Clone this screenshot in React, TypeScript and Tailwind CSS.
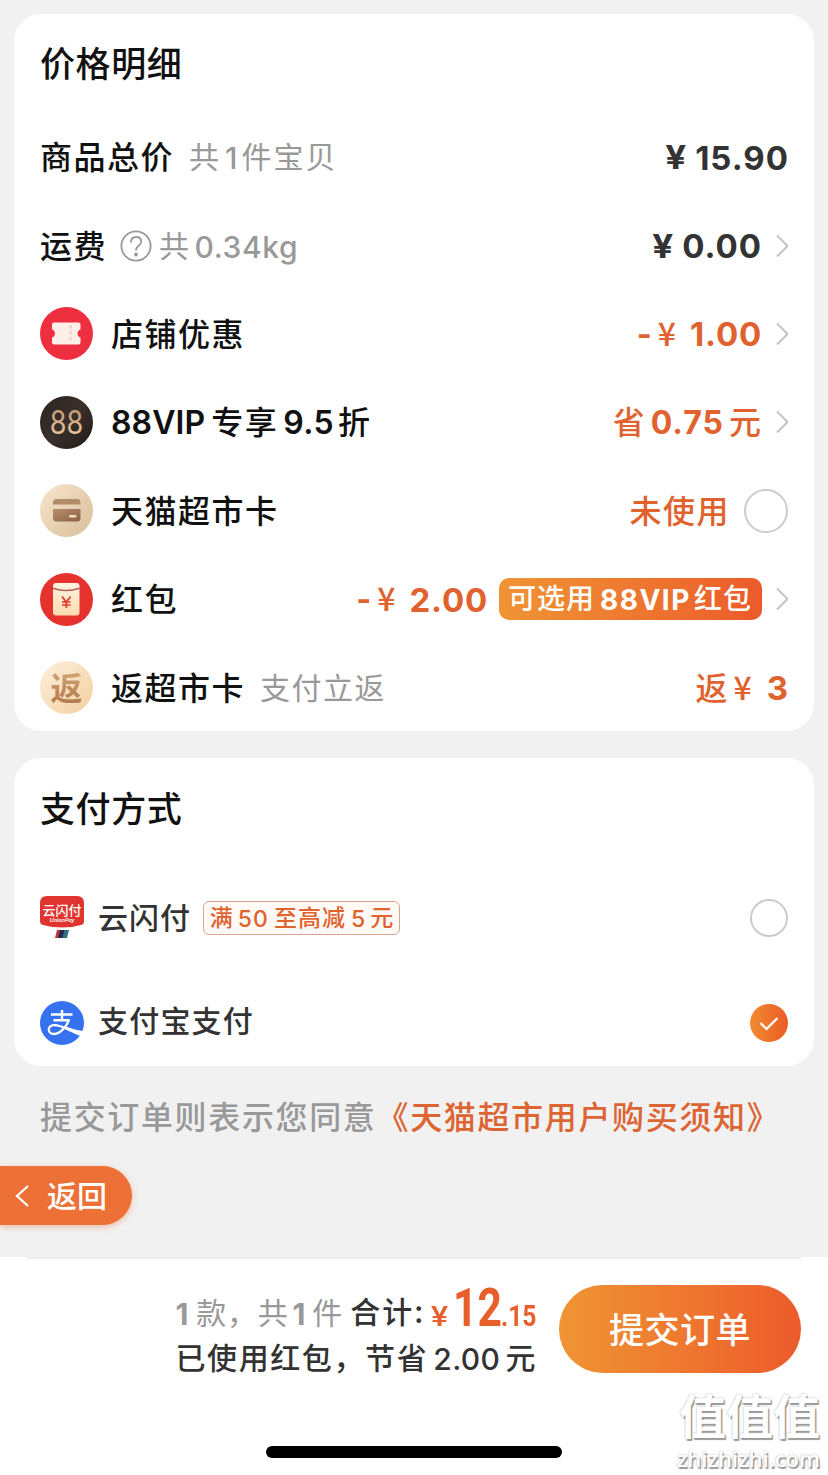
import type { ReactNode } from 'react';
import clsx from 'clsx';

const CJK = 'font-["Noto_Sans_CJK_SC",sans-serif]';
const NUM = 'font-["Inter",sans-serif]';

// Latin digits sit a little lower than the Chinese text around them
function Num({ children, className }: { children: ReactNode; className?: string }) {
  return <span className={clsx('inline-block translate-y-[3px]', NUM, className)}>{children}</span>;
}

function Chevron() {
  return (
    <svg className="ml-[15px] h-6 w-[12px] shrink-0 translate-y-[2px]" viewBox="0 0 12 24" fill="none">
      <path d="M1 1.500 11.500 12 1 22.500" stroke="#c4c4c4" strokeWidth="2" />
    </svg>
  );
}

function CouponIcon() {
  return (
    <svg className="size-[53px]" viewBox="0 0 53 53">
      <circle cx="26.5" cy="26.5" r="26.5" fill="#ee2f40" />
      <path
        d="M14 15.500h24.500a2 2 0 0 1 2 2v5a4.200 4.200 0 0 0 0 8v5a2 2 0 0 1-2 2H14a2 2 0 0 1-2-2v-5a4.200 4.200 0 0 0 0-8v-5a2 2 0 0 1 2-2Z"
        fill="#fdf0e8"
      />
      <path d="M30.500 18v18" stroke="#f3cfc4" strokeWidth="2.500" strokeDasharray="3.500 2.500" />
    </svg>
  );
}

function VipIcon() {
  return (
    <svg className="size-[53px]" viewBox="0 0 53 53">
      <defs>
        <linearGradient id="vip-bg" x1="0" y1="0" x2="1" y2="1">
          <stop offset="0" stopColor="#2a2320" />
          <stop offset="0.5" stopColor="#3a302b" />
          <stop offset="1" stopColor="#1f1a18" />
        </linearGradient>
        <linearGradient id="vip-text" x1="0" y1="0" x2="0" y2="1">
          <stop offset="0" stopColor="#b98f6c" />
          <stop offset="1" stopColor="#f3d3a8" />
        </linearGradient>
      </defs>
      <circle cx="26.5" cy="26.5" r="26.5" fill="url(#vip-bg)" />
      <text
        x="9.700"
        y="38"
        textLength="33.500"
        lengthAdjust="spacingAndGlyphs"
        className="font-['Inter',sans-serif] text-[32px] font-normal"
        fill="url(#vip-text)"
      >
        88
      </text>
    </svg>
  );
}

function CardIcon() {
  return (
    <svg className="size-[53px]" viewBox="0 0 53 53">
      <defs>
        <linearGradient id="card-bg" x1="0" y1="0" x2="1" y2="0.9">
          <stop offset="0" stopColor="#f8e6cc" />
          <stop offset="1" stopColor="#d9bf9c" />
        </linearGradient>
        <linearGradient id="card-fg" x1="0" y1="0" x2="1" y2="1">
          <stop offset="0" stopColor="#b98f6d" />
          <stop offset="1" stopColor="#8a6043" />
        </linearGradient>
      </defs>
      <circle cx="26.5" cy="26.5" r="26.5" fill="url(#card-bg)" />
      <path d="M13 20.500v-2a3.500 3.500 0 0 1 3.500-3.500h20.500a3.500 3.500 0 0 1 3.500 3.500v2Z" fill="#b38d6b" />
      <path d="M13 25h27.500v9a3.500 3.500 0 0 1-3.500 3.500h-20.500a3.500 3.500 0 0 1-3.500-3.500Z" fill="url(#card-fg)" />
      <rect x="29" y="31" width="7.500" height="2.400" rx="1" fill="#f3dec0" />
    </svg>
  );
}

function PacketIcon() {
  return (
    <svg className="size-[53px]" viewBox="0 0 53 53">
      <defs>
        <linearGradient id="packet" x1="0" y1="0" x2="0" y2="1">
          <stop offset="0" stopColor="#fff3e2" />
          <stop offset="1" stopColor="#fbdcae" />
        </linearGradient>
      </defs>
      <circle cx="26.5" cy="26.5" r="26.5" fill="#e5322c" />
      <rect x="13" y="10" width="26.500" height="32.500" rx="3" fill="url(#packet)" />
      <path d="M13 15.200q13.200 4.500 26.500 0" stroke="#b4604f" strokeWidth="1.500" fill="none" />
      <path d="m22 23.500 4.300 5.500 4.300-5.500M26.300 29v6M22 29h8.600M22 32h8.600" stroke="#dd3a2c" strokeWidth="1.700" fill="none" />
    </svg>
  );
}

function RebateIcon() {
  return (
    <span className="flex size-[53px] items-center justify-center rounded-full bg-linear-to-br from-[#fdf0dc] to-[#f2cf9f]">
      <span className="-translate-y-[2px] bg-linear-to-b from-[#d6a679] to-[#b27a4d] bg-clip-text text-[32px] leading-[36px] font-bold text-transparent">
        返
      </span>
    </span>
  );
}

function UnionPayIcon() {
  return (
    <svg className="mb-[2px] h-[44px] w-[44px]" viewBox="0 0 44 44">
      <path d="M7 1h30q7 0 7 7v18q0 3-3 4Q32 32.500 22 32.500T3 30Q0 29 0 26V8q0-7 7-7Z" fill="#df3430" />
      <text x="2.500" y="19.500" textLength="39" lengthAdjust="spacingAndGlyphs" className="text-[13px] font-medium" fill="#fff">
        云闪付
      </text>
      <text x="9.500" y="27" textLength="25" className="font-['Open_Sans',sans-serif] text-[6px] font-semibold italic" fill="#fff">
        UnionPay
      </text>
      <path d="M17 35h4l-2 8h-4Z" fill="#c8323a" />
      <path d="M20 35h5l-2 8h-5Z" fill="#1d2b52" />
      <path d="M24.500 35H29l-2 8h-4.500Z" fill="#33707d" />
    </svg>
  );
}

function AlipayIcon() {
  return (
    <svg className="mt-[2px] size-[44px]" viewBox="0 0 44 44" fill="none">
      <circle cx="22" cy="22" r="22" fill="#3671f0" />
      <path d="M11 13.500h21.500M22 9v10M13.500 19.200h16" stroke="#fff" strokeWidth="2.400" />
      <path
        d="M29 18.500C27.500 24 21 33 14 33c-6.500 0-7.500-8.500 0-8.800C20 24 27 28 33 30.500"
        stroke="#fff"
        strokeWidth="2.300"
      />
      <path d="M25 25.200c5 1.800 11 3.800 18.300 4.800l-2.600 5C36 33.500 31 31 25 27.800Z" fill="#fff" />
    </svg>
  );
}

function Row({ icon, label, children }: { icon?: ReactNode; label: ReactNode; children: ReactNode }) {
  return (
    <div className="flex h-[88.4px] items-center">
      {icon && <span className="mr-[18px] shrink-0">{icon}</span>}
      <div className="flex items-center pb-[4px] text-[32px] font-medium tracking-[1.5px] text-[#111]">{label}</div>
      <div className="ml-auto flex items-center pb-[4px] text-[32px] font-medium text-[#e0622f]">{children}</div>
    </div>
  );
}

function Price({ amount }: { amount: string }) {
  return (
    <span className="flex items-center font-bold text-[#333]">
      <Num className="mr-[9px] origin-right scale-x-[1.15]">¥</Num>
      <Num className="-mr-px text-[33px] tracking-[1px]">{amount}</Num>
    </span>
  );
}

function Discount({ amount }: { amount: string }) {
  return (
    <>
      <Num className="font-bold">-</Num>
      <span className="mr-[14px] ml-[6px]">¥</span>
      <Num className="-mr-px text-[33px] font-bold tracking-[0.8px]">{amount}</Num>
    </>
  );
}

export default function App() {
  return (
    <div className={clsx('relative flex h-[1475px] w-[828px] flex-col overflow-hidden bg-[#f1f1f1] leading-none whitespace-nowrap', CJK)}>
      <section className="mx-[14px] mt-[14px] h-[717px] rounded-[27px] bg-white px-[26px]">
        <h2 className="flex h-[99px] items-center pb-[4px] text-[35px] font-medium tracking-[0.6px] text-[#111]">价格明细</h2>

        <Row
          label={
            <>
              商品总价
              <span className="ml-[15px] flex items-center text-[30px] font-normal tracking-[2px] text-[#999]">
                共<Num className="mr-[2px] ml-[4px] font-medium">1</Num>件宝贝
              </span>
            </>
          }
        >
          <Price amount="15.90" />
        </Row>

        <Row
          label={
            <>
              运费
              <svg className="ml-[13px] size-[32px] translate-y-[2px]" viewBox="0 0 32 32" fill="none" stroke="#999" strokeWidth="1.8">
                <circle cx="16" cy="16" r="14.600" />
                <path d="M11 12.500q0-5.500 5.200-5.500 5 0 5 4.600 0 2.400-2.700 4.400-2.500 2-2.500 4.500" />
                <circle cx="16" cy="24.500" r="1" fill="#999" />
              </svg>
              <span className="ml-[7px] flex items-center text-[30px] font-normal text-[#999]">
                共<Num className="ml-[4px] font-medium tracking-[0.6px]">0.34kg</Num>
              </span>
            </>
          }
        >
          <Price amount="0.00" />
          <Chevron />
        </Row>

        <Row icon={<CouponIcon />} label="店铺优惠">
          <Discount amount="1.00" />
          <Chevron />
        </Row>

        <Row
          icon={<VipIcon />}
          label={
            <>
              <Num className="font-semibold tracking-[0.1px]">88VIP</Num>
              <span className="ml-[6px]">专享</span>
              <Num className="ml-[5px] font-semibold tracking-[0.4px]">9.5</Num>
              <span className="ml-[4px]">折</span>
            </>
          }
        >
          <span>省</span>
          <Num className="mr-[5px] ml-[6px] font-bold tracking-[1px]">0.75</Num>
          <span>元</span>
          <Chevron />
        </Row>

        <Row icon={<CardIcon />} label="天猫超市卡">
          <span className="tracking-[1.5px]">未使用</span>
          <span className="ml-[14px] size-[44px] translate-y-[2px] rounded-full border-2 border-[#ccc]" />
        </Row>

        <Row icon={<PacketIcon />} label="红包">
          <Discount amount="2.00" />
          <span className="ml-[12px] -mr-[1px] flex h-[42px] w-[263px] translate-y-[2px] items-center rounded-[10px] bg-linear-to-r from-[#ef9434] to-[#ec5a2b] pb-[4px] pl-[9px] text-[28px] text-white">
            <span className="tracking-[1px]">可选用</span>
            <Num className="mr-[3px] ml-[5px] font-bold tracking-[1.5px]">88VIP</Num>
            <span className="tracking-[1px]">红包</span>
          </span>
          <Chevron />
        </Row>

        <Row
          icon={<RebateIcon />}
          label={
            <>
              返超市卡
              <span className="ml-[15px] text-[30px] font-normal text-[#999]">支付立返</span>
            </>
          }
        >
          <span>返</span>
          <span className="mr-[15px] ml-[6px]">¥</span>
          <Num className="text-[33px] font-bold">3</Num>
        </Row>
      </section>

      <section className="mx-[14px] mt-[27px] h-[308px] rounded-[27px] bg-white px-[26px]">
        <h2 className="flex h-[100px] items-center pb-[4px] text-[35px] font-medium tracking-[0.6px] text-[#111]">支付方式</h2>

        <div className="mt-[8px] flex h-[104px] items-center text-[30px] font-medium text-[#333]">
          <UnionPayIcon />
          <span className="ml-[14px] pb-[4px] tracking-[1px]">云闪付</span>
          <span className="ml-[12px] flex h-[34px] w-[197px] items-center justify-center rounded-[6px] border border-[#dba48e] bg-[#fffaf6] pb-[3px] text-[23px] text-[#e0622f]">
            满<Num className="mx-[5px] tracking-[1px]">50</Num>
            <span className="tracking-[1px]">至高减</span>
            <Num className="mx-[5px]">5</Num>元
          </span>
          <span className="ml-auto size-[38px] rounded-full border-2 border-[#ccc]" />
        </div>

        <div className="flex h-[104px] items-center text-[30px] font-medium text-[#333]">
          <AlipayIcon />
          <span className="ml-[14px] pb-[7px] tracking-[1.2px]">支付宝支付</span>
          <span className="mt-[1px] ml-auto flex size-[38px] items-center justify-center rounded-full bg-linear-to-r from-[#ef8a32] to-[#ec5a24]">
            <svg className="size-[20px]" viewBox="0 0 20 20" fill="none">
              <path d="m1.500 10 6 6L18.500 5" stroke="#fff" strokeWidth="2.200" />
            </svg>
          </span>
        </div>
      </section>

      <p className="mt-[33px] ml-[40px] flex h-[32px] items-center text-[32px] font-medium tracking-[1.65px] text-[#999]">
        提交订单则表示您同意<span className="text-[#dd6433]">《天猫超市用户购买须知》</span>
      </p>

      <button className="mt-[35px] flex h-[59px] w-[132px] items-center rounded-r-full bg-[#ed7036] pl-[15px] text-[30px] text-white shadow-[0_2px_6px_rgba(237,112,54,0.4)]">
        <svg className="mr-[18px] h-[22px] w-[14px]" viewBox="0 0 14 22" fill="none">
          <path d="M13 1 2 11l11 10" stroke="#fff" strokeWidth="2.200" />
        </svg>
        <span className="pb-[3px] font-medium">返回</span>
      </button>

      <footer className="mt-[32px] flex grow flex-col bg-white px-[27px]">
        <div className="flex justify-end border-t-2 border-[#ececec] pt-[26px]">
          <div className="mr-[23px] flex flex-col items-end text-[30px] text-[#333]">
            <div className="flex h-[56px] items-baseline">
              <span className="mr-[7px] flex -translate-y-[5px] items-center tracking-[0.8px] text-[#999]">
                <Num className="mr-[7px] font-bold">1</Num>款，共
                <Num className="mr-[6px] ml-[4px] font-bold">1</Num>件
              </span>
              <span className="-translate-y-[4px] font-medium tracking-[2px]">合计:</span>
              <span className="flex -translate-y-px items-baseline font-['Roboto',sans-serif] font-bold text-[#e85f2c]">
                <span className="mr-[7px] ml-[6px] origin-left scale-x-[1.15] text-[28px] font-medium">¥</span>
                <span className="w-[48px] origin-left scale-x-[0.79] text-[54px] leading-[48px]">12</span>
                <span className="w-[35px] origin-left scale-x-[0.82] text-[30px]">.15</span>
              </span>
            </div>
            <div className="-mr-[1px] flex items-center font-medium tracking-[1.6px]">
              已使用红包，节省<Num className="mr-[5px] ml-[5px] tracking-[0.4px]">2.00</Num>元
            </div>
          </div>
          <button className="h-[88px] w-[242px] rounded-full bg-linear-to-r from-[#ef9434] to-[#ec5a2b] pb-[4px] text-[35px] font-medium tracking-[0.5px] text-white">
            提交订单
          </button>
        </div>
      </footer>

      <div className="absolute bottom-[17px] left-[266px] h-[12px] w-[296px] rounded-full bg-black" />

      <div className="absolute right-[8px] bottom-[2px] flex flex-col items-end text-white [text-shadow:1.5px_1.5px_1px_#999,0_0_2px_#aaa]">
        <span className="text-[47px] leading-[58px] font-bold">值值值</span>
        <span className="font-['Open_Sans',sans-serif] text-[22px] leading-[30px] font-semibold">zhizhizhi.com</span>
      </div>
    </div>
  );
}
